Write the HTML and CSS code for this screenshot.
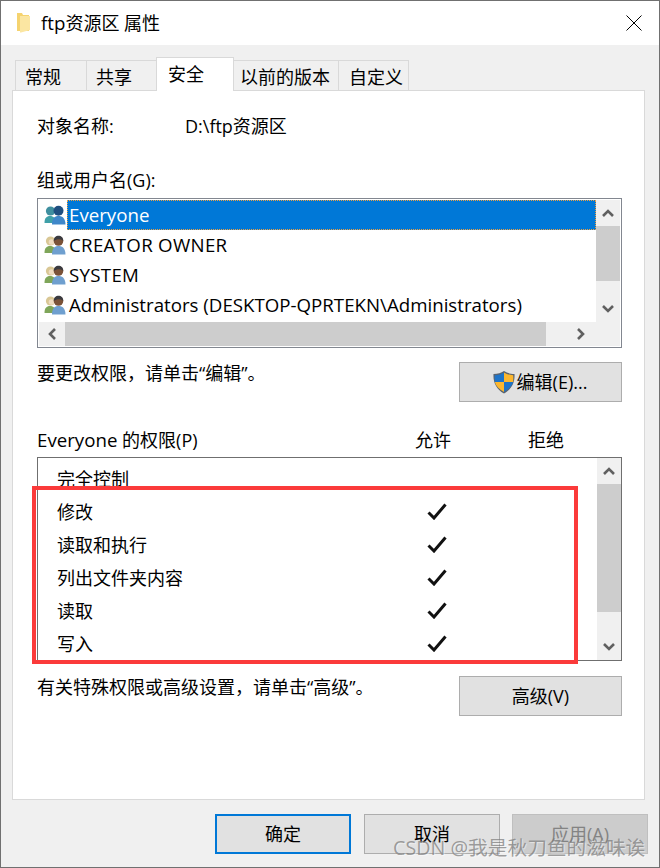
FILE: index.html
```html
<!DOCTYPE html>
<html lang="zh-CN">
<head>
    <meta charset="UTF-8">
    <title>ftp资源区 属性</title>
    <link rel="stylesheet" href="styles.css">
</head>
<body>
    <svg class="sprites" width="0" height="0">
        <symbol id="chev" viewBox="0 0 12 8"><path d="M1 7 L6 2 L11 7" fill="none" stroke="#606060" stroke-width="2.6"/></symbol>
        <symbol id="check" viewBox="0 0 20 17"><path d="M1.5 9.500 L7 15 L18.500 1.500" fill="none" stroke="#111" stroke-width="3"/></symbol>
        <symbol id="users" viewBox="0 0 22 20">
            <path d="M0.500 18 C0.500 13 2.500 11 6 11 C9.500 11 12 13 12 18 Z" fill="#7fa65a"/>
            <circle cx="6.500" cy="6" r="4.600" fill="#d9c795"/>
            <circle cx="7.500" cy="7" r="2.800" fill="#efdcc0"/>
            <path d="M8 19.500 C8 13.500 10.500 11 14.500 11 C18.500 11 21.500 13.500 21.500 19.500 Z" fill="#6f9fcf"/>
            <circle cx="14.500" cy="6" r="4.800" fill="#7a5238"/>
            <path d="M9.800 6 C9.800 2.500 12 0.800 14.500 0.800 C17 0.800 19.300 2.500 19.300 6 C17.500 4 13 3.500 9.800 6 Z" fill="#3a3a40"/>
        </symbol>
        <symbol id="users-sel" viewBox="0 0 22 20">
            <path d="M0.500 18 C0.500 13 2.500 11 6 11 C9.500 11 12 13 12 18 Z" fill="#3fa0a8"/>
            <circle cx="6.500" cy="6" r="4.600" fill="#3f8f9f"/>
            <path d="M8 19.500 C8 13.500 10.500 11 14.500 11 C18.500 11 21.500 13.500 21.500 19.500 Z" fill="#3f87c9"/>
            <circle cx="14.500" cy="5.800" r="5" fill="#1f4f80"/>
        </symbol>
    </svg>

    <div class="window">
        <div class="titlebar">
            <svg class="folder" width="15" height="20" viewBox="0 0 15 20">
                <path d="M1 0 H6 L7 2 H13 V18 H1 Z" fill="#f5d36f"/>
                <path d="M4 3 H14 V17 L5 19.500 H4 Z" fill="#fbe6a2"/>
            </svg>
            <span class="title"><span class="latin">ftp</span>资源区 属性</span>
            <svg class="close" width="16" height="16" viewBox="0 0 16 16">
                <path d="M0.500 0.500 L15.500 15.500 M15.500 0.500 L0.500 15.500" stroke="#000" stroke-width="1"/>
            </svg>
        </div>

        <div class="dialog">
            <div class="tabs">
                <div class="tab tab-general">常规</div>
                <div class="tab tab-share">共享</div>
                <div class="tab active">安全</div>
                <div class="tab tab-versions">以前的版本</div>
                <div class="tab tab-custom">自定义</div>
            </div>

            <div class="panel">
                <div class="object-row">
                    <span class="object-label">对象名称:</span>
                    <span>D:\ftp资源区</span>
                </div>

                <div class="group-label">组或用户名(G):</div>
                <div class="group-box">
                    <div class="user-list">
                        <div class="user selected">
                            <svg class="user-icon" width="22" height="20"><use href="#users-sel"/></svg>
                            <span class="user-name">Everyone</span>
                        </div>
                        <div class="user">
                            <svg class="user-icon" width="22" height="20"><use href="#users"/></svg>
                            <span class="user-name caps">CREATOR OWNER</span>
                        </div>
                        <div class="user">
                            <svg class="user-icon" width="22" height="20"><use href="#users"/></svg>
                            <span class="user-name caps">SYSTEM</span>
                        </div>
                        <div class="user">
                            <svg class="user-icon" width="22" height="20"><use href="#users"/></svg>
                            <span class="user-name">Administrators (DESKTOP-QPRTEKN\Administrators)</span>
                        </div>
                    </div>
                    <div class="vscroll group-vscroll">
                        <div class="arrow"><svg width="12" height="8"><use href="#chev"/></svg></div>
                        <div class="thumb group-thumb"></div>
                        <div class="arrow arrow-down"><svg class="flip" width="12" height="8"><use href="#chev"/></svg></div>
                    </div>
                    <div class="hscroll">
                        <div class="arrow hcell"><svg class="left" width="12" height="8"><use href="#chev"/></svg></div>
                        <div class="hthumb"></div>
                        <div class="arrow hcell hcell-right"><svg class="right" width="12" height="8"><use href="#chev"/></svg></div>
                    </div>
                </div>

                <div class="action-row">
                    <span>要更改权限，请单击“编辑”。</span>
                    <button class="btn side-btn">
                        <svg class="shield" width="24" height="24" viewBox="0 0 24 24">
                            <path d="M12 1 C15 3 18 4 22.500 4 C23 12 20 19 12 23.500 C4 19 1 12 1.500 4 C6 4 9 3 12 1 Z" fill="#5a6470"/>
                            <path d="M12 2.500 V12 H2.800 C2.600 9 2.600 7 2.800 5.200 C6.500 5 9.500 4.200 12 2.500 Z" fill="#1f74c8"/>
                            <path d="M12 2.500 C14.500 4.200 17.500 5 21.200 5.200 C21.400 7 21.400 9 21.100 12 H12 Z" fill="#fcb72e"/>
                            <path d="M2.800 12 H12 V22 C7 19 3.800 16 2.800 12 Z" fill="#fcb72e"/>
                            <path d="M12 12 H21.100 C20.200 16 17 19 12 22 Z" fill="#1f74c8"/>
                        </svg>编辑(E)...
                    </button>
                </div>

                <div class="perm-head">
                    <span class="perm-title"><span class="latin">Everyone</span> 的权限(P)</span>
                    <span class="perm-allow">允许</span>
                    <span>拒绝</span>
                </div>
                <div class="perm-box">
                    <div class="perm-list">
                        <div class="perm"><span class="perm-name">完全控制</span></div>
                        <div class="perm"><span class="perm-name">修改</span><svg width="20" height="17"><use href="#check"/></svg></div>
                        <div class="perm"><span class="perm-name">读取和执行</span><svg width="20" height="17"><use href="#check"/></svg></div>
                        <div class="perm"><span class="perm-name">列出文件夹内容</span><svg width="20" height="17"><use href="#check"/></svg></div>
                        <div class="perm"><span class="perm-name">读取</span><svg width="20" height="17"><use href="#check"/></svg></div>
                        <div class="perm"><span class="perm-name">写入</span><svg width="20" height="17"><use href="#check"/></svg></div>
                    </div>
                    <div class="vscroll">
                        <div class="arrow"><svg width="12" height="8"><use href="#chev"/></svg></div>
                        <div class="thumb perm-thumb"></div>
                        <div class="arrow arrow-down"><svg class="flip" width="12" height="8"><use href="#chev"/></svg></div>
                    </div>
                </div>

                <div class="action-row advanced-row">
                    <span>有关特殊权限或高级设置，请单击“高级”。</span>
                    <button class="btn side-btn">高级(V)</button>
                </div>
            </div>

            <div class="footer">
                <button class="btn footer-btn default">确定</button>
                <button class="btn footer-btn">取消</button>
                <button class="btn footer-btn disabled">应用(A)</button>
            </div>
        </div>

        <div class="highlight"></div>
        <div class="watermark">CSDN @我是秋刀鱼的滋味诶</div>
    </div>
</body>
</html>
```

FILE: styles.css
```css
* {
    box-sizing: border-box;
}
body {
    margin: 0;
    font-family: "Open Sans", "Noto Sans CJK SC", sans-serif;
    font-size: 18px;
    color: #000;
    background-color: #fff;
}
.sprites {
    position: absolute;
}
.latin {
    font-size: 18.7px;
}
.window {
    position: relative;
    width: 660px;
    height: 868px;
    border: 1px solid #707070;
    display: flex;
    flex-direction: column;
    overflow: hidden;
}

/* title bar */
.titlebar {
    height: 44px;
    flex: none;
    display: flex;
    align-items: center;
    padding: 0 17px 0 15px;
    background-color: #fff;
}
.folder {
    margin-right: 10px;
}
.title {
    flex: 1;
    line-height: 44px;
}

/* tabs */
.dialog {
    flex: 1;
    display: flex;
    flex-direction: column;
    background-color: #f0f0f0;
}
.tabs {
    height: 45px;
    flex: none;
    display: flex;
    align-items: flex-end;
    padding-left: 14px;
}
.tab {
    height: 30px;
    margin-left: -1px;
    border: 1px solid #d9d9d9;
    border-bottom: none;
    line-height: 32px;
    white-space: nowrap;
}
.tab-general {
    width: 72px;
    margin-left: 0;
    padding-left: 9px;
}
.tab-share {
    width: 71px;
    padding-left: 9px;
}
.tab.active {
    position: relative;
    z-index: 1;
    width: 78px;
    height: 34px;
    margin-bottom: -1px;
    padding-left: 11px;
    background-color: #fff;
    line-height: 33px;
}
.tab-versions {
    width: 106px;
    padding-left: 6px;
}
.tab-custom {
    width: 71px;
    padding-left: 10px;
}

/* main panel */
.panel {
    height: 710px;
    flex: none;
    margin: 0 14px 0 11px;
    padding: 23px 22px 0 24px;
    background-color: #fff;
    border: 1px solid #d9d9d9;
}
.object-row {
    display: flex;
    line-height: 24px;
}
.object-label {
    width: 148px;
}
.group-label {
    margin-top: 30px;
    line-height: 24px;
}
.group-box {
    height: 150px;
    margin-top: 6px;
    display: grid;
    grid-template-columns: 1fr 24px;
    grid-template-rows: 122px 24px;
    padding: 1px;
    border: 1px solid #828790;
}
.user-list {
    overflow: hidden;
}
.user {
    height: 30px;
    display: flex;
    align-items: center;
    padding-left: 5px;
    white-space: nowrap;
}
.user-icon {
    flex: none;
    margin-right: 1px;
}
.user-name {
    flex: 1;
    height: 30px;
    padding-left: 2px;
    font-size: 18.7px;
    line-height: 30px;
}
.caps {
    letter-spacing: 0.3px;
}
.selected .user-name {
    background-color: #0078d7;
    border: 1px dotted #f0a040;
    padding-left: 1px;
    line-height: 28px;
    color: #fff;
}

/* scrollbars */
.vscroll {
    display: flex;
    flex-direction: column;
    background-color: #f0f0f0;
}
.arrow {
    flex: none;
    height: 26px;
    display: flex;
    align-items: center;
    justify-content: center;
}
.arrow-down {
    margin-top: auto;
}
.thumb {
    background-color: #cdcdcd;
}
.group-thumb {
    height: 55px;
}
.perm-thumb {
    height: 128px;
}
.flip {
    transform: rotate(180deg);
}
.left {
    transform: rotate(-90deg);
}
.right {
    transform: rotate(90deg);
}
.hscroll {
    grid-column: 1 / 3;
    display: flex;
    background-color: #f0f0f0;
}
.hcell {
    width: 26px;
    height: 24px;
}
.hthumb {
    width: 481px;
    background-color: #cdcdcd;
}
.hcell-right {
    width: 50px;
    padding-left: 20px;
}

/* buttons */
.btn {
    font-family: inherit;
    font-size: 18px;
    color: #000;
    height: 40px;
    padding: 0 0 2px;
    background-color: #e1e1e1;
    border: 1px solid #adadad;
}
.side-btn {
    width: 163px;
    display: flex;
    align-items: center;
    justify-content: center;
}
.shield {
    margin: 2px 1px 0 -2px;
}
.action-row {
    height: 40px;
    margin-top: 14px;
    display: flex;
    justify-content: space-between;
    line-height: 22px;
}
.advanced-row {
    margin-top: 15px;
}

/* permissions */
.perm-head {
    margin-top: 26px;
    display: flex;
    line-height: 24px;
}
.perm-title {
    width: 378px;
}
.perm-allow {
    width: 113px;
}
.perm-box {
    height: 204px;
    margin-top: 5px;
    display: grid;
    grid-template-columns: 1fr 24px;
    border: 1px solid #6f6f6f;
}
.perm-list {
    padding: 4px 0 0 19px;
    overflow: hidden;
}
.perm {
    height: 33px;
    display: flex;
    align-items: center;
}
.perm-name {
    width: 370px;
    padding-bottom: 2px;
}

/* bottom row */
.footer {
    display: flex;
    justify-content: flex-end;
    gap: 13px;
    padding: 14px 11px 0 0;
}
.footer-btn {
    width: 136px;
}
.default {
    border: 2px solid #0078d7;
}
.disabled {
    margin-left: -1px;
    background-color: #ccc;
    border-color: #bfbfbf;
    color: #838383;
}

/* things drawn over the dialog */
.highlight {
    position: absolute;
    left: 31px;
    top: 485px;
    width: 546px;
    height: 178px;
    border: 4px solid #fb3a3a;
}
.watermark {
    position: absolute;
    left: 392px;
    top: 833px;
    font-size: 19.7px;
    line-height: 28px;
    white-space: nowrap;
    color: rgba(120, 120, 120, 0.7);
    text-shadow: 1px 1px 1px rgba(255, 255, 255, 0.5);
}
```
